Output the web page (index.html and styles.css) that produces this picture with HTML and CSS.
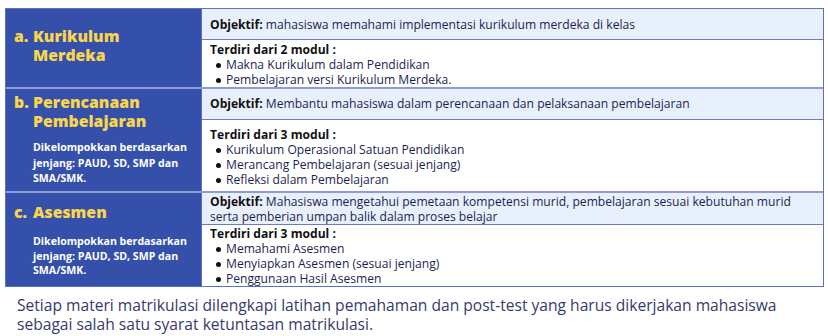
FILE: index.html
```html
<!DOCTYPE html>
<html>
<head>
<meta charset="utf-8">
<link rel="stylesheet" href="styles.css">
</head>
<body>
<div class="table">
  <div class="row row-a">
    <div class="left center">
      <div class="title"><span class="num">a.</span><span>Kurikulum Merdeka</span></div>
    </div>
    <div class="right">
      <div class="obj obj-a"><b>Objektif:</b> mahasiswa memahami implementasi kurikulum merdeka di kelas</div>
      <div class="detail detail-a">
        <div class="head">Terdiri dari 2 modul :</div>
        <ul>
          <li>Makna Kurikulum dalam Pendidikan</li>
          <li>Pembelajaran versi Kurikulum Merdeka.</li>
        </ul>
      </div>
    </div>
  </div>
  <div class="row row-b">
    <div class="left top">
      <div class="title"><span class="num">b.</span><span>Perencanaan Pembelajaran</span></div>
      <div class="desc">Dikelompokkan berdasarkan jenjang: PAUD, SD, SMP dan SMA/SMK.</div>
    </div>
    <div class="right">
      <div class="obj obj-b"><b>Objektif:</b> Membantu mahasiswa dalam perencanaan dan pelaksanaan pembelajaran</div>
      <div class="detail detail-b">
        <div class="head">Terdiri dari 3 modul :</div>
        <ul>
          <li>Kurikulum Operasional Satuan Pendidikan</li>
          <li>Merancang Pembelajaran (sesuai jenjang)</li>
          <li>Refleksi dalam Pembelajaran</li>
        </ul>
      </div>
    </div>
  </div>
  <div class="row row-c">
    <div class="left top c">
      <div class="title"><span class="num">c.</span><span>Asesmen</span></div>
      <div class="desc">Dikelompokkan berdasarkan jenjang: PAUD, SD, SMP dan SMA/SMK.</div>
    </div>
    <div class="right">
      <div class="obj obj-c"><b>Objektif:</b> Mahasiswa mengetahui pemetaan kompetensi murid, pembelajaran sesuai kebutuhan murid serta pemberian umpan balik dalam proses belajar</div>
      <div class="detail detail-c">
        <div class="head">Terdiri dari 3 modul :</div>
        <ul>
          <li>Memahami Asesmen</li>
          <li>Menyiapkan Asesmen (sesuai jenjang)</li>
          <li>Penggunaan Hasil Asesmen</li>
        </ul>
      </div>
    </div>
  </div>
</div>
<p class="note">Setiap materi matrikulasi dilengkapi latihan pemahaman dan post-test yang harus dikerjakan mahasiswa sebagai salah satu syarat ketuntasan matrikulasi.</p>
</body>
</html>
```
FILE: styles.css
```css
* { box-sizing: border-box; }
html, body { margin: 0; padding: 0; background: #ffffff; }
body {
  font-family: "Open Sans", "DejaVu Sans", sans-serif;
  padding: 8px 0 0 5px;
}
.table {
  width: 819px;
  border: 1px solid #5d6fc0;
  display: flex;
  flex-direction: column;
}
.row { display: flex; }
.row + .row { border-top: 2px solid #8d9bd6; }
.row-a { height: 78px; }
.row-b { height: 104px; }
.row-c { height: 95px; }
.left {
  width: 195px;
  flex: none;
  background: #3550ab;
  color: #ffffff;
  padding: 0 8px 0 8px;
  display: flex;
  flex-direction: column;
}
.left.center { justify-content: center; padding-bottom: 4px; }
.left.top { padding-top: 4px; }
.left.c { padding-top: 10px; }
.title {
  display: flex;
  width: 150px;
  color: #f8d54e;
  font-weight: 800;
  font-size: 15.8px;
  line-height: 19px;
}
.title .num { width: 19px; flex: none; }
.desc {
  font-weight: 700;
  font-size: 10.6px;
  line-height: 15.5px;
  padding-left: 19px;
  margin-top: 9px;
}
.left.c .desc { margin-top: 12px; line-height: 14.5px; }
.right {
  flex: 1;
  display: flex;
  flex-direction: column;
  border-left: 1px solid #5d6fc0;
  color: #1c1f4f;
  font-size: 12.1px;
  line-height: 15px;
}
.obj {
  background: #e9f0fd;
  border-bottom: 1px solid #6b7bc6;
  padding: 0 8px;
}
.obj b { color: #111111; font-weight: 700; }
.obj-a { height: 32px; padding-top: 8px; }
.obj-b { height: 31px; padding-top: 7px; }
.obj-c { height: 32px; padding-top: 1px; }
.detail { flex: 1; padding: 0 8px; }
.detail-a { padding-top: 2px; }
.detail-b { padding-top: 7px; }
.detail-c { padding-top: 1px; }
.head { font-weight: 700; color: #111111; }
ul {
  margin: 0;
  padding: 0 0 0 6px;
  list-style: none;
}
li { position: relative; padding-left: 10px; }
li::before {
  content: "";
  position: absolute;
  left: 0;
  top: 6px;
  width: 5px;
  height: 5px;
  border-radius: 50%;
  background: #111111;
}
.note {
  margin: 9px 0 0 12px;
  font-size: 15.6px;
  line-height: 19px;
  color: #363a6e;
  width: 785px;
}
```
